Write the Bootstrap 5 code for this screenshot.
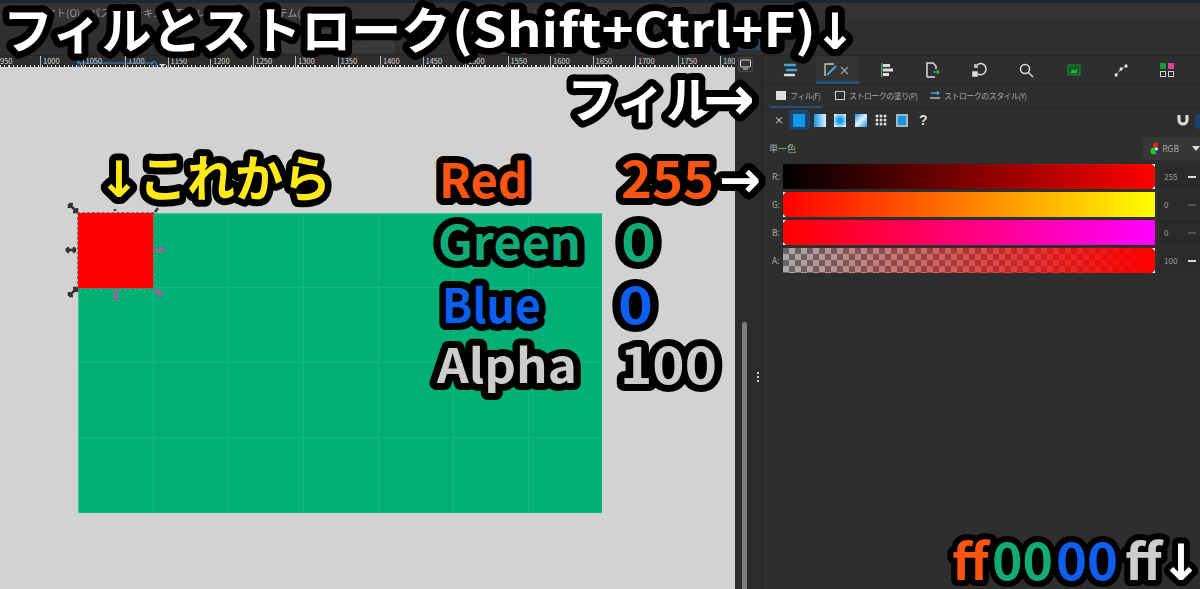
<!DOCTYPE html>
<html lang="ja">
<head>
<meta charset="utf-8">
<title>フィルとストローク</title>
<link href="https://cdn.jsdelivr.net/npm/bootstrap@5.3.0/dist/css/bootstrap.min.css" rel="stylesheet">
<style>
html,body{width:1200px;height:589px;overflow:hidden;margin:0;background:#2d2d2d;color:#b9b9b9;font-family:"Noto Sans CJK JP","Noto Sans",sans-serif;font-size:8px;line-height:1}
.app-shell{width:1200px;height:589px;position:relative}
.top-strip{height:3px;background:#1d2730}
.menu-band{height:19px;background:#333;padding-left:6px;gap:10px;font-size:10px;color:#999}
.tool-band{height:34px;background:#2f2f2f;border-bottom:1px solid #262626;position:relative}
.tool-hi{position:absolute;left:710px;top:11px;width:53px;height:17px;background:#23466f}
.tool-box{position:absolute;left:278px;top:7px;width:117px;height:24px;background:#3a3a3a;border-radius:3px}
.work-row{height:533px}
.left-col{width:735px}
.ruler-bar{height:11px;background-color:#2d2d2d;background-image:repeating-linear-gradient(90deg,#ddd 0 1px,transparent 1px 4.25px);background-size:100% 2px;background-position:0 100%;background-repeat:no-repeat;position:relative;overflow:hidden;color:#ddd;font-size:7.5px;padding-left:0}
.ruler-num{width:42.5px;flex:none;border-left:1px solid #bbb;padding-left:2px;height:11px;line-height:9px}
.ruler-num-first{width:40px;border-left:0;padding-left:0}
.ruler-sel{position:absolute;left:77px;top:0}
.canvas-area{height:522px;background:#d2d2d2;position:relative;overflow:hidden}
.green-page{position:absolute;left:78px;top:146px;width:524px;height:300px;background-color:#00b077;background-image:linear-gradient(90deg,#14b782 1px,transparent 1px),linear-gradient(0deg,#14b782 1px,transparent 1px);background-size:75px 75px;background-position:75px 0,0 0;box-shadow:inset 0 1px #38c596,inset 1px 0 #38c596}
.red-box{position:absolute;left:78px;top:146px;width:75px;height:75px;background:#f00;outline:1px dashed #9a5a66}
.canvas-svg{position:absolute;left:0;top:0}
.gutter-col{width:28px;background:#2c2c2c;position:relative;border-right:1px solid #222}
.gutter-track{position:absolute;left:7px;top:266px;width:5px;height:270px;background:#7d7d7d;border-radius:3px}
.gutter-dots{position:absolute;left:22px;top:316px;width:2px;height:10px;background:repeating-linear-gradient(180deg,#ccc 0 2px,transparent 2px 4px)}
.monitor-btn{position:absolute;left:3px;top:1px;width:15px;height:15px;background:#333;border:1px solid #444;border-radius:2px}
.side-panel{width:437px;background:#2e2e2e}
.dock-tabs{height:29px;border-bottom:1px solid #242424;position:relative}
.dock-cell{position:absolute;top:6px;width:16px;height:16px}
.dock-active{position:absolute;left:53px;top:0;width:43px;height:28px;background:#333;border-bottom:3px solid #24507f}
.sub-tabs{height:23px;border-bottom:1px solid #262626;position:relative;color:#a8a8a8;font-size:8px;letter-spacing:-.55px}
.sub-item{gap:4px;position:absolute;top:6px}
.sub-line{position:absolute;left:6px;bottom:-1px;width:54px;height:2px;background:#24507f}
.swatch-white{width:10px;height:9px;background:#ddd;display:block}
.swatch-open{width:10px;height:9px;border:1.5px solid #ccc;display:block}
.paint-row{height:24px;padding-left:11px;position:relative}
.paint-x{color:#ddd;font-size:10px;width:15px}
.paint-cell{width:20.500px;height:20px;display:flex;align-items:center;justify-content:center;flex:none}
.paint-cell-on{background:#1f4368;border-radius:3px}
.paint-chip{width:12px;height:13px;display:block}
.chip-flat{background:#0f97e8}
.chip-lin{background:linear-gradient(90deg,#0f97e8,#e6f3fb)}
.chip-rad{background:radial-gradient(circle,#0f97e8 20%,#e6f3fb 90%)}
.chip-mesh{background:linear-gradient(135deg,#0f97e8,#e6f3fb 50%,#0f97e8)}
.chip-frame{background:#0f97e8;border:2px solid #aab6bd}
.paint-q{color:#ddd;font-size:14px;font-weight:700;margin-left:7px;font-family:"Liberation Sans",sans-serif}
.right-tool{position:absolute;left:414px;top:6px}
.edge-chip{position:absolute;right:0;top:5px;width:5px;height:16px;background:#1f4368;border-radius:4px 0 0 4px}
.mode-row{height:32px;padding-left:6px;position:relative;font-size:9px;color:#aaa}
.rgb-btn{position:absolute;left:380px;top:5px;width:57px;height:23px;background:#373737;border-radius:3px;font-size:8.5px;padding-left:7px;gap:4px;color:#a5a5a5}
.rgb-caret{width:0;height:0;border:4px solid transparent;border-top:5px solid #ddd;border-bottom:0;margin-left:9px}
.slider-row{height:25px;margin-bottom:3px;padding-left:9px}
.slider-key{width:11px;font-size:8.5px;color:#aaa;flex:none}
.slider-bar{width:372px;height:25px;flex:none;position:relative}
.bar-r{background:linear-gradient(90deg,#000,#f00);border-radius:0 5px 5px 0}
.bar-g{background:linear-gradient(90deg,#f00,#ff0);border-radius:5px 0 0 5px}
.bar-b{background:linear-gradient(90deg,#f00,#f0f);border-radius:5px 0 0 5px}
.bar-a{border-radius:0 5px 5px 0;background:linear-gradient(90deg,rgba(255,0,0,0),#f00),conic-gradient(#a9a9a9 25%,#666 0 50%,#a9a9a9 0 75%,#666 0) 0 0/12px 12px}
.notch-end::before,.notch-end::after,.notch-start::before,.notch-start::after{content:"";position:absolute;width:3px;height:3px;background:#eee}
.notch-end::before{right:0;top:0;clip-path:polygon(0 0,100% 0,100% 100%)}
.notch-end::after{right:0;bottom:0;clip-path:polygon(0 100%,100% 0,100% 100%)}
.notch-start::before{left:0;top:0;clip-path:polygon(0 0,100% 0,0 100%)}
.notch-start::after{left:0;bottom:0;clip-path:polygon(0 0,100% 100%,0 100%)}
.val-box{width:41px;height:25px;margin-left:4px;background:#2a2a2a;border-radius:3px;padding-left:5px;font-size:8px;color:#a0a0a0;flex:none;position:relative}
.val-dash{position:absolute;left:29px;top:12px;width:8px;height:1.500px;background:#ddd}
.val-dash-dim{background:#555}
.anno-layer{position:absolute;left:0;top:0;z-index:5;pointer-events:none}
.anno-layer text{font-family:"Noto Sans CJK JP",sans-serif;font-weight:700;font-size:50px;stroke:#000;stroke-width:14px;stroke-linejoin:round;paint-order:stroke fill}
.anno-layer text.latin-run{font-size:47px}
.anno-layer text.arrow-glyph{font-family:"DejaVu Sans",sans-serif}
.anno-layer text.arrow-big{font-size:62px}
.anno-layer text.tight-stroke{stroke-width:12px}
.a-white{fill:#fff}.a-yellow{fill:#ffe91a}.a-orange{fill:#fc5412}.a-green{fill:#10ab78}.a-blue{fill:#0d5ff0}.a-grey{fill:#cdcdcd}
</style>
</head>
<body>
<div class="app-shell">
  <div class="top-strip"></div>
  <div class="menu-band d-flex align-items-center"><span>オブジェクト(O)</span><span>パス(P)</span><span>テキスト(T)</span><span>レイヤー(L)</span><span>システム(N)</span></div>
  <div class="tool-band"><span class="tool-box"></span><span class="tool-hi"></span></div>
  <div class="work-row d-flex">
    <div class="left-col">
      <div class="ruler-bar d-flex">
        <span class="ruler-num ruler-num-first">950</span><span class="ruler-num">1000</span><span class="ruler-num">1050</span><span class="ruler-num">1100</span><span class="ruler-num">1150</span><span class="ruler-num">1200</span><span class="ruler-num">1250</span><span class="ruler-num">1300</span><span class="ruler-num">1350</span><span class="ruler-num">1400</span><span class="ruler-num">1450</span><span class="ruler-num">1500</span><span class="ruler-num">1550</span><span class="ruler-num">1600</span><span class="ruler-num">1650</span><span class="ruler-num">1700</span><span class="ruler-num">1750</span><span class="ruler-num">1800</span>
        <svg class="ruler-sel" width="92" height="11"><path d="M0 7H77" stroke="#3f8fd0" fill="none"/><circle cx="1" cy="8" r="2.500" fill="none" stroke="#3f8fd0"/><circle cx="77" cy="8" r="2.500" fill="none" stroke="#3f8fd0"/><path d="M82 8h7l-3.500 3z" fill="#ddd"/></svg>
      </div>
      <div class="canvas-area">
        <div class="green-page"></div>
        <div class="red-box"></div>
        <svg class="canvas-svg" width="735" height="522" fill="none" stroke-width="2.500">
          <g stroke="#333"><path d="M70 138l6 6M69 137h4M69 137v4M77 145h-4M77 145v-4"/><path d="M66 183h10M66 183l3-2.500M66 183l3 2.500M76 183l-3-2.500M76 183l-3 2.500"/><path d="M70 228l6-6M69 229h4M69 229v-4M77 221h-4M77 221v4"/><path d="M155 145l3-4"/><path d="M115 142v2"/></g>
          <g stroke="#b5569f" stroke-width="3"><path d="M155 183h9M164 183l-2-2M164 183l-2 2"/><path d="M116 223v9M116 232l-2-2M116 232l2-2"/><path d="M155 222l6 6M161 228v-3M161 228h-3"/></g>
        </svg>
      </div>
    </div>
    <div class="gutter-col"><span class="monitor-btn"><svg width="13" height="13" fill="none" stroke="#ddd"><rect x="1.500" y="2" width="10" height="7" rx="1"/><path d="M4 11h5"/></svg></span><span class="gutter-track"></span><span class="gutter-dots"></span></div>
    <div class="side-panel">
      <div class="dock-tabs">
        <span class="dock-active"></span>
        <svg class="dock-cell" style="left:19px" viewBox="0 0 16 16" fill="none" stroke-width="2.400" stroke-linecap="round"><path d="M3 3h10" stroke="#4aa3d8"/><path d="M5 8h9" stroke="#4aa3d8"/><path d="M3 13h9" stroke="#ddd"/></svg>
        <svg class="dock-cell" style="left:60px" viewBox="0 0 16 16" fill="none"><path d="M2 14V2h9" stroke="#ccc" stroke-width="1.300"/><path d="M4 13L13 4" stroke="#4aa3d8" stroke-width="2"/></svg>
        <svg class="dock-cell" style="left:77px;top:10px;width:9px;height:9px" viewBox="0 0 9 9" stroke="#999" stroke-width="1.400"><path d="M1 1l7 7M8 1l-7 7"/></svg>
        <svg class="dock-cell" style="left:115px" viewBox="0 0 16 16" fill="#ddd"><rect x="3" y="1" width="1.500" height="14" fill="#3aa55a"/><rect x="5" y="2" width="7" height="3"/><rect x="5" y="6.500" width="10" height="3"/><rect x="5" y="11" width="6" height="3"/></svg>
        <svg class="dock-cell" style="left:161px" viewBox="0 0 16 16" fill="none" stroke-width="1.500"><path d="M3 15V1h6l3 3v3M3 15h8" stroke="#ddd"/><path d="M9 10h6M13 8l2 2-2 2" stroke="#3aa55a"/></svg>
        <svg class="dock-cell" style="left:209px" viewBox="0 0 16 16" fill="none" stroke="#ddd" stroke-width="1.500"><path d="M4 4a5.500 5.500 0 1 1 2 8"/><path d="M3 2v3h3"/><rect x="1" y="10" width="4" height="4" fill="#ddd"/></svg>
        <svg class="dock-cell" style="left:255px" viewBox="0 0 16 16" fill="none" stroke="#ddd" stroke-width="1.500"><circle cx="7" cy="7" r="4.500"/><path d="M10.500 10.500L15 15"/></svg>
        <svg class="dock-cell" style="left:303px" viewBox="0 0 16 16"><rect x="2" y="3" width="12" height="10" fill="#0c5f22" stroke="#1e8a38"/><path d="M4 11l3-4 2 2 2-3v5z" fill="#2bb14a"/></svg>
        <svg class="dock-cell" style="left:350px" viewBox="0 0 16 16" fill="#ddd" stroke="#ddd" stroke-dasharray="3 1"><path d="M3 13L8 7l5-3" fill="none"/><circle cx="3" cy="13" r="1.300"/><circle cx="8" cy="7" r="1.300"/><circle cx="13" cy="4" r="1.300"/></svg>
        <svg class="dock-cell" style="left:396px" viewBox="0 0 16 16"><rect x="1" y="1" width="6" height="6" fill="#1a9a3c"/><rect x="9" y="1" width="6" height="6" fill="#e0409a"/><rect x="1.500" y="9.500" width="5" height="5" fill="none" stroke="#ccc"/><rect x="9.500" y="9.500" width="5" height="5" fill="none" stroke="#ccc"/></svg>
      </div>
      <div class="sub-tabs">
        <span class="sub-item d-flex align-items-center" style="left:13px"><i class="swatch-white"></i>フィル(F)</span>
        <span class="sub-item d-flex align-items-center" style="left:72px"><i class="swatch-open"></i>ストロークの塗り(P)</span>
        <span class="sub-item d-flex align-items-center" style="left:167px"><svg width="10" height="9" fill="none" stroke-width="1.300"><path d="M1 2h8M7 .5L9 2 7 3.500" stroke="#4aa3d8"/><path d="M0 7h10" stroke="#ccc"/></svg>ストロークのスタイル(Y)</span>
        <span class="sub-line"></span>
      </div>
      <div class="paint-row d-flex align-items-center">
        <span class="paint-x">×</span>
        <span class="paint-cell paint-cell-on"><i class="paint-chip chip-flat"></i></span>
        <span class="paint-cell"><i class="paint-chip chip-lin"></i></span>
        <span class="paint-cell"><i class="paint-chip chip-rad"></i></span>
        <span class="paint-cell"><i class="paint-chip chip-mesh"></i></span>
        <span class="paint-cell"><svg width="12" height="12" fill="#ddd"><circle cx="2" cy="2" r="1.500"/><circle cx="6" cy="2" r="1.500"/><circle cx="10" cy="2" r="1.500"/><circle cx="2" cy="6" r="1.500"/><circle cx="6" cy="6" r="1.500"/><circle cx="10" cy="6" r="1.500"/><circle cx="2" cy="10" r="1.500"/><circle cx="6" cy="10" r="1.500"/><circle cx="10" cy="10" r="1.500"/></svg></span>
        <span class="paint-cell"><i class="paint-chip chip-frame"></i></span>
        <span class="paint-q">?</span>
        <svg class="right-tool" width="12" height="12" viewBox="0 0 12 12" fill="none" stroke="#ddd" stroke-width="3"><path d="M2 1v5a4 4 0 0 0 8 0V1"/></svg>
        <span class="edge-chip"></span>
      </div>
      <div class="mode-row d-flex align-items-center">単一色
        <span class="rgb-btn d-flex align-items-center"><svg width="13" height="13"><circle cx="6.500" cy="4" r="3.500" fill="#e22"/><circle cx="4" cy="9" r="3.500" fill="#2c2"/><circle cx="9" cy="9" r="3.500" fill="#22d"/><circle cx="6.500" cy="7" r="1.500" fill="#eee"/></svg>RGB<i class="rgb-caret"></i></span>
      </div>
      <div class="slider-row d-flex align-items-center"><span class="slider-key">R:</span><div class="slider-bar bar-r notch-end"></div><span class="val-box d-flex align-items-center">255<i class="val-dash"></i></span></div>
      <div class="slider-row d-flex align-items-center"><span class="slider-key">G:</span><div class="slider-bar bar-g notch-start"></div><span class="val-box d-flex align-items-center">0<i class="val-dash val-dash-dim"></i></span></div>
      <div class="slider-row d-flex align-items-center"><span class="slider-key">B:</span><div class="slider-bar bar-b notch-start"></div><span class="val-box d-flex align-items-center">0<i class="val-dash val-dash-dim"></i></span></div>
      <div class="slider-row d-flex align-items-center"><span class="slider-key">A:</span><div class="slider-bar bar-a notch-end"></div><span class="val-box d-flex align-items-center">100<i class="val-dash"></i></span></div>
    </div>
  </div>
  <svg class="anno-layer" width="1200" height="589">
    <text class="a-white" x="3" y="49" textLength="448" lengthAdjust="spacingAndGlyphs">フィルとストローク</text>
    <text class="a-white latin-run" x="452" y="47" textLength="364" lengthAdjust="spacingAndGlyphs">(Shift+Ctrl+F)</text>
    <text class="a-white arrow-glyph" x="814" y="49">↓</text>
    <text class="a-white" x="567" y="118">フィル</text>
    <text class="a-white arrow-glyph arrow-big" x="703" y="120">→</text>
    <text class="a-yellow arrow-glyph" x="98" y="197">↓</text>
    <text class="a-yellow" x="139" y="197" textLength="192" lengthAdjust="spacingAndGlyphs">これから</text>
    <text class="a-orange latin-run" x="439" y="198" textLength="89" lengthAdjust="spacingAndGlyphs">Red</text>
    <text class="a-orange" x="621" y="198" textLength="93" lengthAdjust="spacingAndGlyphs">255</text>
    <text class="a-white arrow-glyph" x="719" y="197">→</text>
    <text class="a-green latin-run" x="438" y="260" textLength="143" lengthAdjust="spacingAndGlyphs">Green</text>
    <text class="a-green" x="621" y="261" textLength="35" lengthAdjust="spacingAndGlyphs">0</text>
    <text class="a-blue latin-run" x="442" y="323" textLength="99" lengthAdjust="spacingAndGlyphs">Blue</text>
    <text class="a-blue" x="618" y="324" textLength="35" lengthAdjust="spacingAndGlyphs">0</text>
    <text class="a-grey latin-run" x="437" y="383" textLength="140" lengthAdjust="spacingAndGlyphs">Alpha</text>
    <text class="a-grey" x="620" y="384" textLength="97" lengthAdjust="spacingAndGlyphs">100</text>
    <g>
      <text class="a-orange tight-stroke" x="952" y="580" textLength="37" lengthAdjust="spacingAndGlyphs">ff</text>
      <text class="a-green tight-stroke" x="992" y="580" textLength="61" lengthAdjust="spacingAndGlyphs">00</text>
      <text class="a-blue tight-stroke" x="1056" y="580" textLength="62" lengthAdjust="spacingAndGlyphs">00</text>
      <text class="a-grey tight-stroke" x="1125" y="580" textLength="37" lengthAdjust="spacingAndGlyphs">ff</text>
      <text class="a-white tight-stroke arrow-glyph" x="1160" y="580">↓</text>
    </g>
  </svg>
</div>
<script src="https://cdn.jsdelivr.net/npm/bootstrap@5.3.0/dist/js/bootstrap.bundle.min.js"></script>
</body>
</html>
